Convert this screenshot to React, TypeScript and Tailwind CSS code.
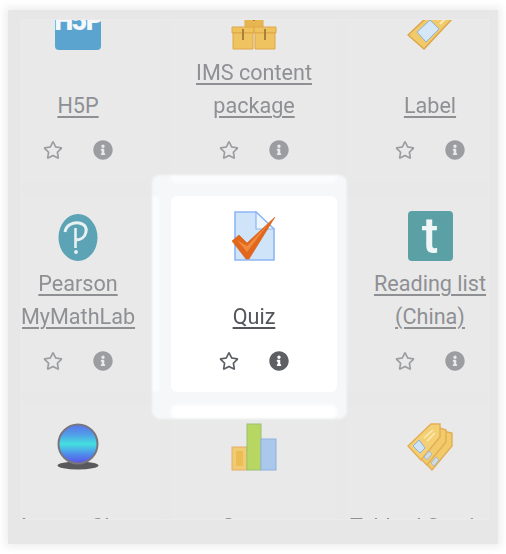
import { ReactNode } from "react";
import { FaRegStar, FaInfoCircle } from "react-icons/fa";

const H5pIcon = () => (
  <div className="flex h-[46px] w-[46px] items-end justify-center rounded-[4px] bg-[#5ba4d0] pb-[15px] text-[27px] leading-none font-black tracking-[-1.5px] text-[#f4f8fb]">
    H5P
  </div>
);

const PackageIcon = () => (
  <svg width="46" height="46" viewBox="0 0 46 46">
    <path d="M14 2h18v22H14z" fill="#e8b650" stroke="#e0a94a" />
    <path d="M1 23h22v6H1z" fill="#eec25c" stroke="#dfa64a" />
    <path d="M2 29h20v16H2z" fill="#efc35f" stroke="#dfa64a" />
    <path d="M23 23h22v6H23z" fill="#eec25c" stroke="#dfa64a" />
    <path d="M24 29h20v16H24z" fill="#efc35f" stroke="#dfa64a" />
    <path d="M11 25h2v11h-2zM33 25h2v11h-2z" fill="#a87f3c" />
    <path d="M22 9h2v8h-2z" fill="#a87f3c" />
  </svg>
);

const LabelIcon = () => (
  <svg width="46" height="46" viewBox="0 0 46 46">
    <path d="M17 45 1 31 32 2h13v13z" fill="#f1cb6a" stroke="#dba54c" strokeWidth="1.5" />
    <path d="M10 28 23 16l9 9-13 13z" fill="#d5e6f7" stroke="#8fb1d8" />
    <path d="M26 12 34 5M30 16l9-9M33 20l8-8" stroke="#fbeab8" strokeWidth="2" />
  </svg>
);

const PearsonIcon = () => (
  <svg width="40" height="47" viewBox="0 0 40 47">
    <ellipse cx="20" cy="23.5" rx="19.5" ry="23.5" fill="#5ba3b5" />
    <path
      d="M7 18c1-7 8-10 14-9 6 1 8 5 7 9-1 5-5 8-10 8"
      fill="none"
      stroke="#e9f1f3"
      strokeWidth="3"
    />
    <path d="M17.500 14v20" stroke="#e9f1f3" strokeWidth="2.600" />
    <circle cx="18" cy="38" r="1.900" fill="#e9f1f3" />
  </svg>
);

const ReadingIcon = () => (
  <div className="flex h-[50px] w-[45px] items-center justify-center rounded-[4px] bg-[#5aa0a5] text-[50px] leading-none font-medium text-[#f0f5f5]">
    t
  </div>
);

const QuizIcon = () => (
  <svg width="46" height="50" viewBox="0 0 46 50">
    <path d="M4 1h21l18 17v31H4z" fill="#cfe4f8" stroke="#8db6f4" strokeWidth="1.600" />
    <path d="M25 1v17h18z" fill="#eef6fd" stroke="#8db6f4" strokeWidth="1.200" />
    <path d="M1 30l7-6 8 8L44 6 18 48h-3z" fill="#e2671c" stroke="#d5601a" strokeWidth="0.600" />
    <path d="M6 29l10 12L38 12 16 35z" fill="#ef8a3e" />
  </svg>
);

const SphereIcon = () => (
  <svg width="42" height="48" viewBox="0 0 42 48">
    <defs>
      <linearGradient id="sphere" x1="0" y1="0" x2="0" y2="1">
        <stop offset="0" stopColor="#5a74ea" />
        <stop offset="0.25" stopColor="#509ce8" />
        <stop offset="0.5" stopColor="#45e0e0" />
        <stop offset="0.75" stopColor="#4f90ec" />
        <stop offset="1" stopColor="#5a50e8" />
      </linearGradient>
    </defs>
    <ellipse cx="21" cy="42.500" rx="20.500" ry="4" fill="#59595c" />
    <circle cx="21" cy="21" r="19.500" fill="url(#sphere)" stroke="#77767f" strokeWidth="2" />
  </svg>
);

const ChartIcon = () => (
  <svg width="46" height="48" viewBox="0 0 46 48">
    <rect x="1" y="24" width="15" height="23" fill="#f0cb74" stroke="#e6ad6a" />
    <rect x="5" y="28" width="7" height="15" fill="#ebbd52" />
    <rect x="16" y="1" width="14" height="46" fill="#b7d762" stroke="#97c272" />
    <rect x="30" y="16" width="15" height="31" fill="#aac7ec" stroke="#8fb1e0" />
  </svg>
);

const TagsIcon = () => (
  <svg width="46" height="48" viewBox="0 0 46 48">
    <path d="M25 47 12 33 36 8l9 2v13z" fill="#f1cb6a" stroke="#e3ad56" strokeWidth="1.400" />
    <path d="M20 42 8 30 30 4l9 3v12z" fill="#f1cb6a" stroke="#e3ad56" strokeWidth="1.400" />
    <path d="M14 37 1 23 24 1h9v13z" fill="#f3d074" stroke="#e3ad56" strokeWidth="1.400" />
    <path d="M6 23l6-6 6 8-5 5z" fill="#cfe2f6" stroke="#8fb1d8" />
    <path d="M17 34l5-6 3 3-5 6zM24 40l5-6 3 3-5 6z" fill="#cfdbe0" stroke="#8fb1d8" strokeWidth="0.700" />
    <path d="M17 15l9-8M20 18l8-8" stroke="#fbeab8" strokeWidth="1.600" />
  </svg>
);

type Item = {
  lines: string[];
  icon: ReactNode;
  active?: boolean;
};

const items: Item[] = [
  { lines: ["H5P"], icon: <H5pIcon /> },
  { lines: ["IMS content", "package"], icon: <PackageIcon /> },
  { lines: ["Label"], icon: <LabelIcon /> },
  { lines: ["Pearson", "MyMathLab"], icon: <PearsonIcon /> },
  { lines: ["Quiz"], icon: <QuizIcon />, active: true },
  { lines: ["Reading list", "(China)"], icon: <ReadingIcon /> },
  { lines: ["Knowre Class"], icon: <SphereIcon /> },
  { lines: ["Survey"], icon: <ChartIcon /> },
  { lines: ["Tabbed Sections"], icon: <TagsIcon /> },
];

const Cell = ({ lines, icon, active }: Item) => (
  <div className={active ? "relative z-10" : "relative"}>
    {active && (
      <div className="absolute -top-[21px] -right-[10px] -bottom-[27px] -left-[19px] rounded-[8px] bg-[#f5f7f9] blur-[1px]">
        <div className="absolute top-0 left-[19px] h-[8px] w-[166px] rounded-b-[5px] bg-[#fbfcfd]" />
        <div className="absolute top-[21px] left-0 h-[196px] w-[7px] rounded-r-[4px] bg-[#fbfcfd]" />
        <div className="absolute top-[230px] left-[19px] h-[13px] w-[166px] rounded-[5px] bg-white" />
      </div>
    )}
    <div
      className={`relative flex h-full flex-col items-center rounded-[6px] ${
        active ? "bg-white text-[#53575c]" : "bg-[#e9e9e9] text-[#8e9094]"
      }`}
    >
      <div className="flex h-[71px] w-full items-end justify-center pb-[6px]">{icon}</div>
      <div className="flex h-[66px] w-full flex-col justify-end text-center text-[21.6px] leading-[33px] whitespace-nowrap">
        {lines.map((line) => (
          <div key={line}>
            <span className="underline decoration-[1.5px] underline-offset-[3px]">{line}</span>
          </div>
        ))}
      </div>
      <div
        className={`mt-[18px] flex items-center gap-[30px] text-[20px] ${
          active ? "text-[#5c6065]" : "text-[#9b9da1]"
        }`}
      >
        <FaRegStar />
        <FaInfoCircle />
      </div>
    </div>
  </div>
);

export default function App() {
  return (
    <div className="h-[554px] w-[506px] overflow-hidden bg-white pt-[10px] pl-[8px] font-['Roboto',sans-serif]">
      <div className="h-[534px] w-[490px] bg-[#e7e7e7] pt-[10px] pl-[14px] shadow-[0_0_8px_3px_#eeeeee] blur-[0.7px]">
        <div className="h-[499px] w-[466px] overflow-hidden bg-[#e8e8e8] ring-1 ring-[#ebebeb]">
          <div className="-mt-[35px] -ml-[27px] grid w-[518px] grid-cols-[166px_166px_166px] grid-rows-[197px_196px_196px] gap-x-[10px] gap-y-[14px]">
            {items.map((item) => (
              <Cell key={item.lines[0]} {...item} />
            ))}
          </div>
        </div>
      </div>
    </div>
  );
}
